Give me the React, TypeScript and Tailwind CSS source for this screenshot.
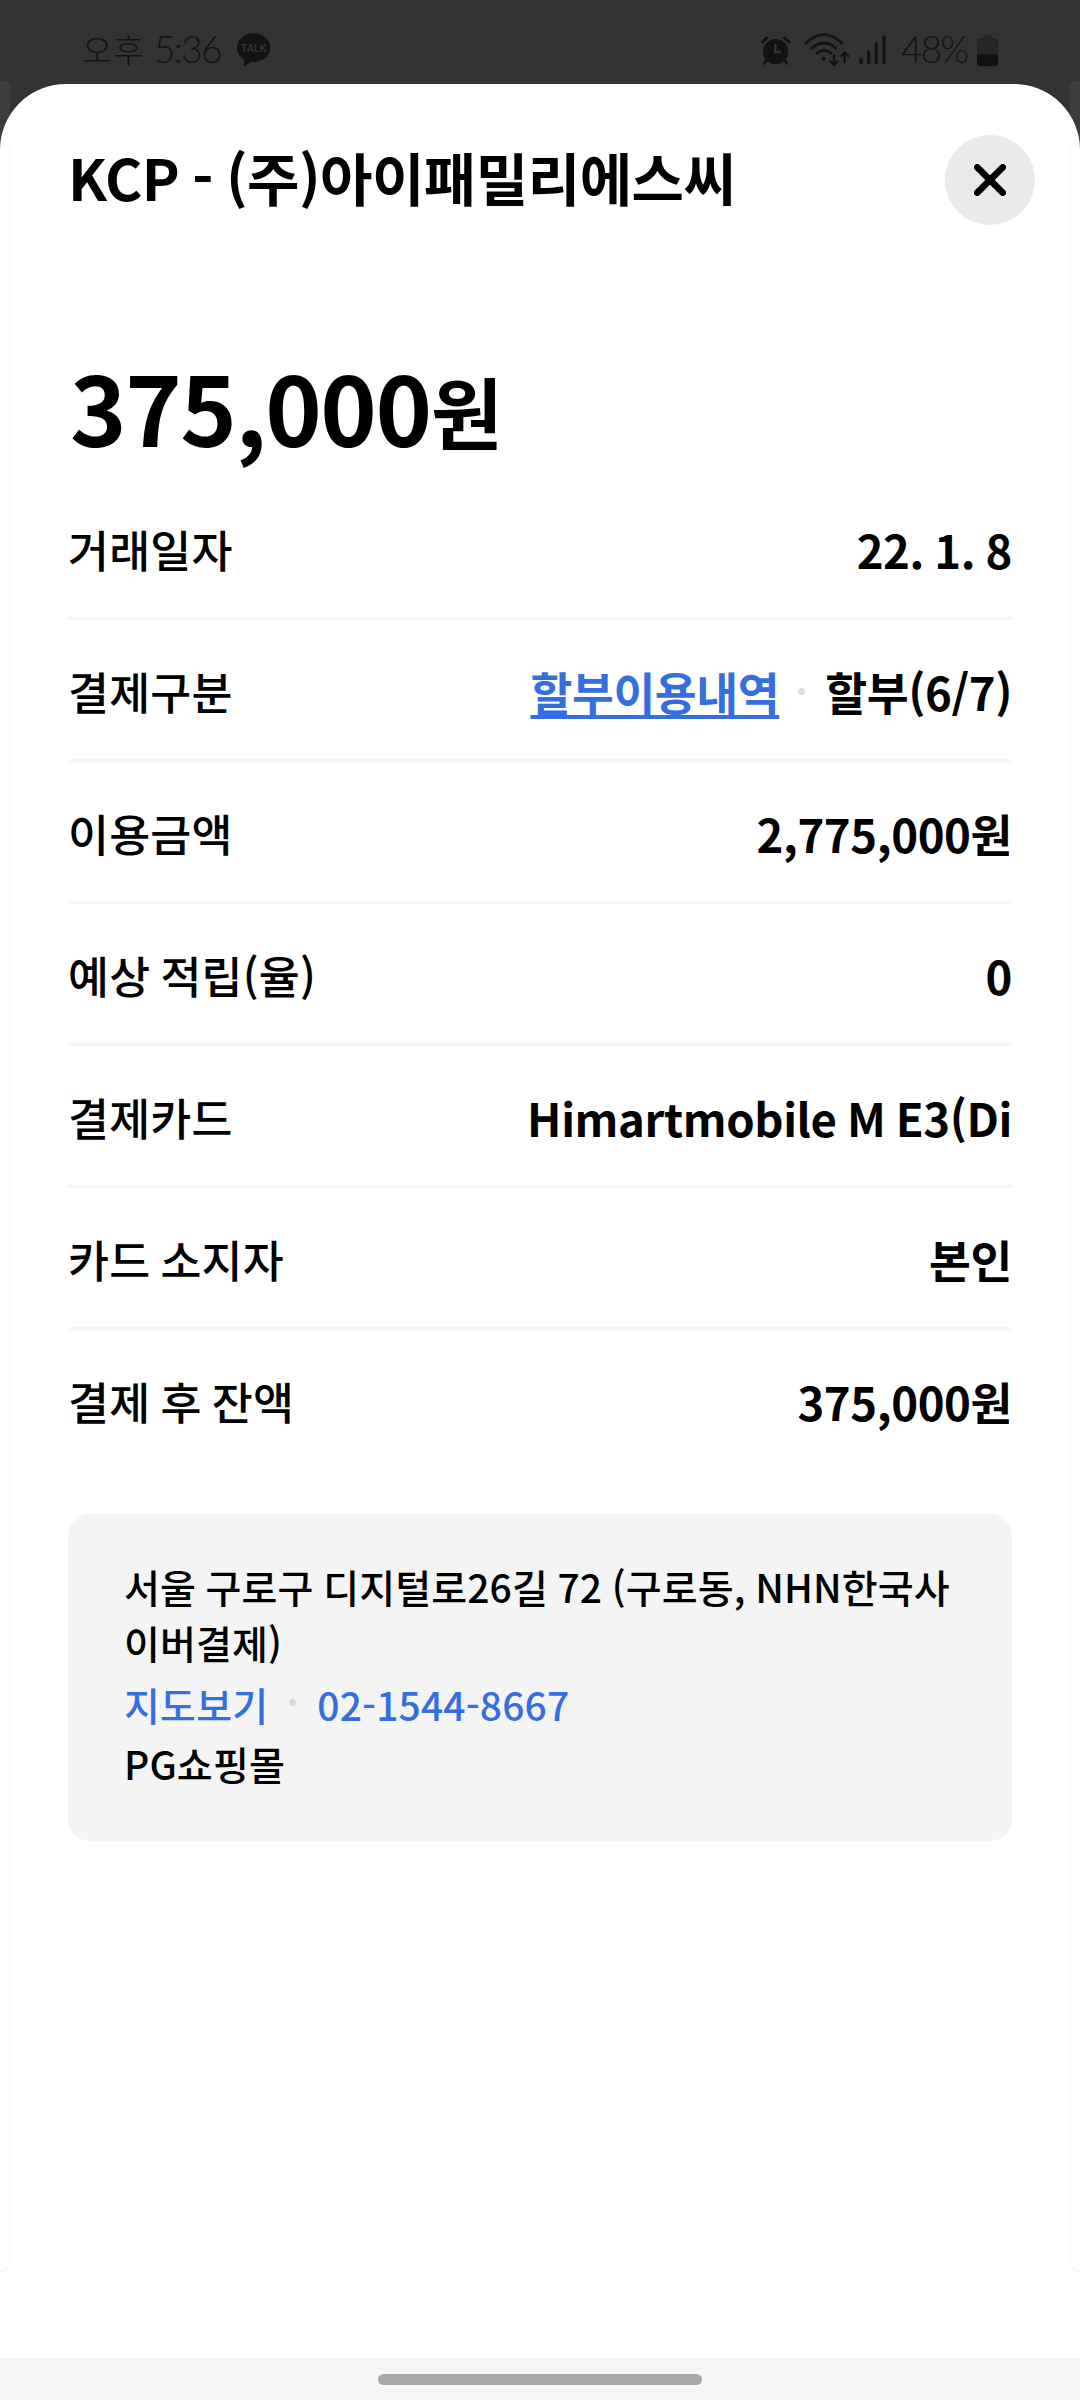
import type { ReactNode } from "react";

const font = "font-['Noto_Sans_CJK_KR',sans-serif]";

function StatusBar() {
  return (
    <div className="flex h-[84px] items-start justify-between bg-[#333333] pl-[82px] pr-[82px] pt-[24px] text-[#131313]">
      <div className="flex h-[50px] items-center whitespace-nowrap">
        <span className="w-[72px] text-[33px] font-light leading-[50px] tracking-[1px]">오후</span>
        <span className="w-[83px] font-['Lato'] text-[37px] font-light leading-[50px] tracking-[-1.6px]">5:36</span>
        <svg className="mt-[2px] h-[34px] w-[34px]" viewBox="0 0 102 102">
          <ellipse cx="50" cy="44" rx="50" ry="43" fill="#131313" />
          <path d="M22 76 L19 101 L46 84 Z" fill="#131313" />
          <text x="50" y="57" textAnchor="middle" fontSize="35" fontWeight="700" fontFamily="Roboto" textLength="76" lengthAdjust="spacingAndGlyphs" fill="#333333">TALK</text>
        </svg>
      </div>
      <div className="flex h-[50px] items-center whitespace-nowrap">
        <svg className="mt-[1px] h-[34px] w-[130px]" viewBox="120 98 390 102" fill="none" stroke="#131313" strokeLinecap="round">
          <circle cx="167" cy="154" r="38" fill="#131313" stroke="none" />
          <path d="M127 125 L140 113 M194 113 L207 125" strokeWidth="9" />
          <path d="M140 180 L133 189 M194 180 L201 189" strokeWidth="8" />
          <path d="M166 131 V155 H184" stroke="#333333" strokeWidth="7" strokeLinecap="butt" />
          <path d="M258 128 Q312 78 365 128 M275 144 Q312 112 348 144 M291 159 Q312 140 333 159" strokeWidth="8" />
          <circle cx="311" cy="175" r="6" fill="#131313" stroke="none" />
          <path d="M342 165 V193 M331 183 L342 194 L353 183 M374 186 V157 M363 167 L374 156 L385 167" strokeWidth="7" />
          <path d="M423 177 V187 M446 155 V187 M469 131 V187 M492 110 V187" strokeWidth="10" />
        </svg>
        <span className="ml-[11px] w-[76px] font-['Lato'] text-[37px] font-light leading-[50px] tracking-[-1.8px]">48%</span>
        <svg className="mt-[2px] h-[33px] w-[21px]" viewBox="0 0 63 96">
          <path d="M20 0 H44 V11 H54 Q63 11 63 20 V59 H0 V20 Q0 11 9 11 H20 Z" fill="#262626" />
          <path d="M0 59 H63 V86 Q63 95 54 95 H9 Q0 95 0 86 Z" fill="#111111" />
        </svg>
      </div>
    </div>
  );
}

function Row({ label, last, children }: { label: string; last?: boolean; children: ReactNode }) {
  return (
    <div className={last ? "flex h-[139px] items-center justify-between" : "flex h-[142px] items-center justify-between border-b-[3px] border-[#f6f6f6]"}>
      <span className="pt-[3px] text-[44.5px] font-medium leading-[64px] tracking-[0.2px] [word-spacing:-2.5px]">{label}</span>
      <div className="flex items-center pt-[3px] text-[45.5px] font-bold leading-[64px] tracking-[-0.4px] [word-spacing:-2px]">{children}</div>
    </div>
  );
}

export default function App() {
  return (
    <div lang="ko" className={`relative flex h-[2400px] w-[1080px] flex-col overflow-hidden bg-[#333333] text-black ${font}`}>
      <StatusBar />
      <div className="absolute left-0 top-[81px] h-[100px] w-[10px] rounded-tr-[6px] bg-[#3d3d3d]" />
      <div className="absolute right-0 top-[81px] h-[100px] w-[10px] rounded-tl-[6px] bg-[#3d3d3d]" />
      <main className="relative flex flex-1 flex-col rounded-t-[66px] bg-white px-[68px]">
        <div className="absolute left-0 top-[60px] h-[2128px] w-[11px] rounded-br-[10px] border-b-2 border-r-2 border-[#fafafa]" />
        <div className="absolute right-0 top-[60px] h-[2128px] w-[11px] rounded-bl-[10px] border-b-2 border-l-2 border-[#fafafa]" />
        <header className="mr-[-23px] mt-[51px] flex h-[90px] items-center justify-between">
          <h1 className="mt-[-8px] whitespace-nowrap text-[57px] font-bold leading-[80px] tracking-[-0.5px] [word-spacing:-2.5px]">KCP - (주)아이패밀리에스씨</h1>
          <button aria-label="닫기" className="flex h-[90px] w-[90px] items-center justify-center rounded-full bg-[#eaeaea]">
            <svg className="h-[32px] w-[32px]" viewBox="0 0 32 32" stroke="#000" strokeWidth="6.6" strokeLinecap="round">
              <path d="M3.3 3.3 L28.7 28.7 M28.7 3.3 L3.3 28.7" />
            </svg>
          </button>
        </header>
        <div className="mb-[7px] mt-[116px] flex h-[130px] items-start whitespace-nowrap text-[96px] font-bold leading-[130px]">
          <span className="w-[363px] pl-[2px] tracking-[-1.5px]">375,000</span>
          <span className="text-[78px] leading-[138px]">원</span>
        </div>
        <section>
          <Row label="거래일자">22. 1. 8</Row>
          <Row label="결제구분">
            <span className="text-[#346fe0] underline decoration-[4px] underline-offset-[4px] [text-decoration-skip-ink:none]">할부이용내역</span>
            <span className="ml-[19px] mr-[20px] h-[7px] w-[7px] rounded-full bg-[#dcdcdc]" />
            <span>할부(6/7)</span>
          </Row>
          <Row label="이용금액">2,775,000원</Row>
          <Row label="예상 적립(율)">0</Row>
          <Row label="결제카드">Himartmobile M E3(Di</Row>
          <Row label="카드 소지자">본인</Row>
          <Row label="결제 후 잔액" last>375,000원</Row>
        </section>
        <section className="mt-[45px] h-[327px] shrink-0 rounded-[22px] bg-[#f4f4f4] pl-[56px] pt-[44px] text-[39px] font-medium leading-[56px] [word-spacing:-1.5px]">
          <p className="whitespace-nowrap tracking-[0.13px]">서울 구로구 디지털로26길 72 (구로동, NHN한국사<br />이버결제)</p>
          <div className="mt-[6px] flex items-center text-[#346fe0]">
            <span className="tracking-[0.2px]">지도보기</span>
            <span className="mb-[3px] ml-[21px] mr-[21px] h-[7px] w-[7px] rounded-full bg-[#d8d8d8]" />
            <span className="tracking-[0.15px]">02-1544-8667</span>
          </div>
          <p className="mt-[3px] tracking-[0.13px]">PG쇼핑몰</p>
        </section>
      </main>
      <footer className="relative flex h-[42px] justify-center bg-[#f5f5f5] pt-[16px]">
        <div className="h-[11px] w-[324px] rounded-full bg-[#a9a9a9]" />
      </footer>
    </div>
  );
}
